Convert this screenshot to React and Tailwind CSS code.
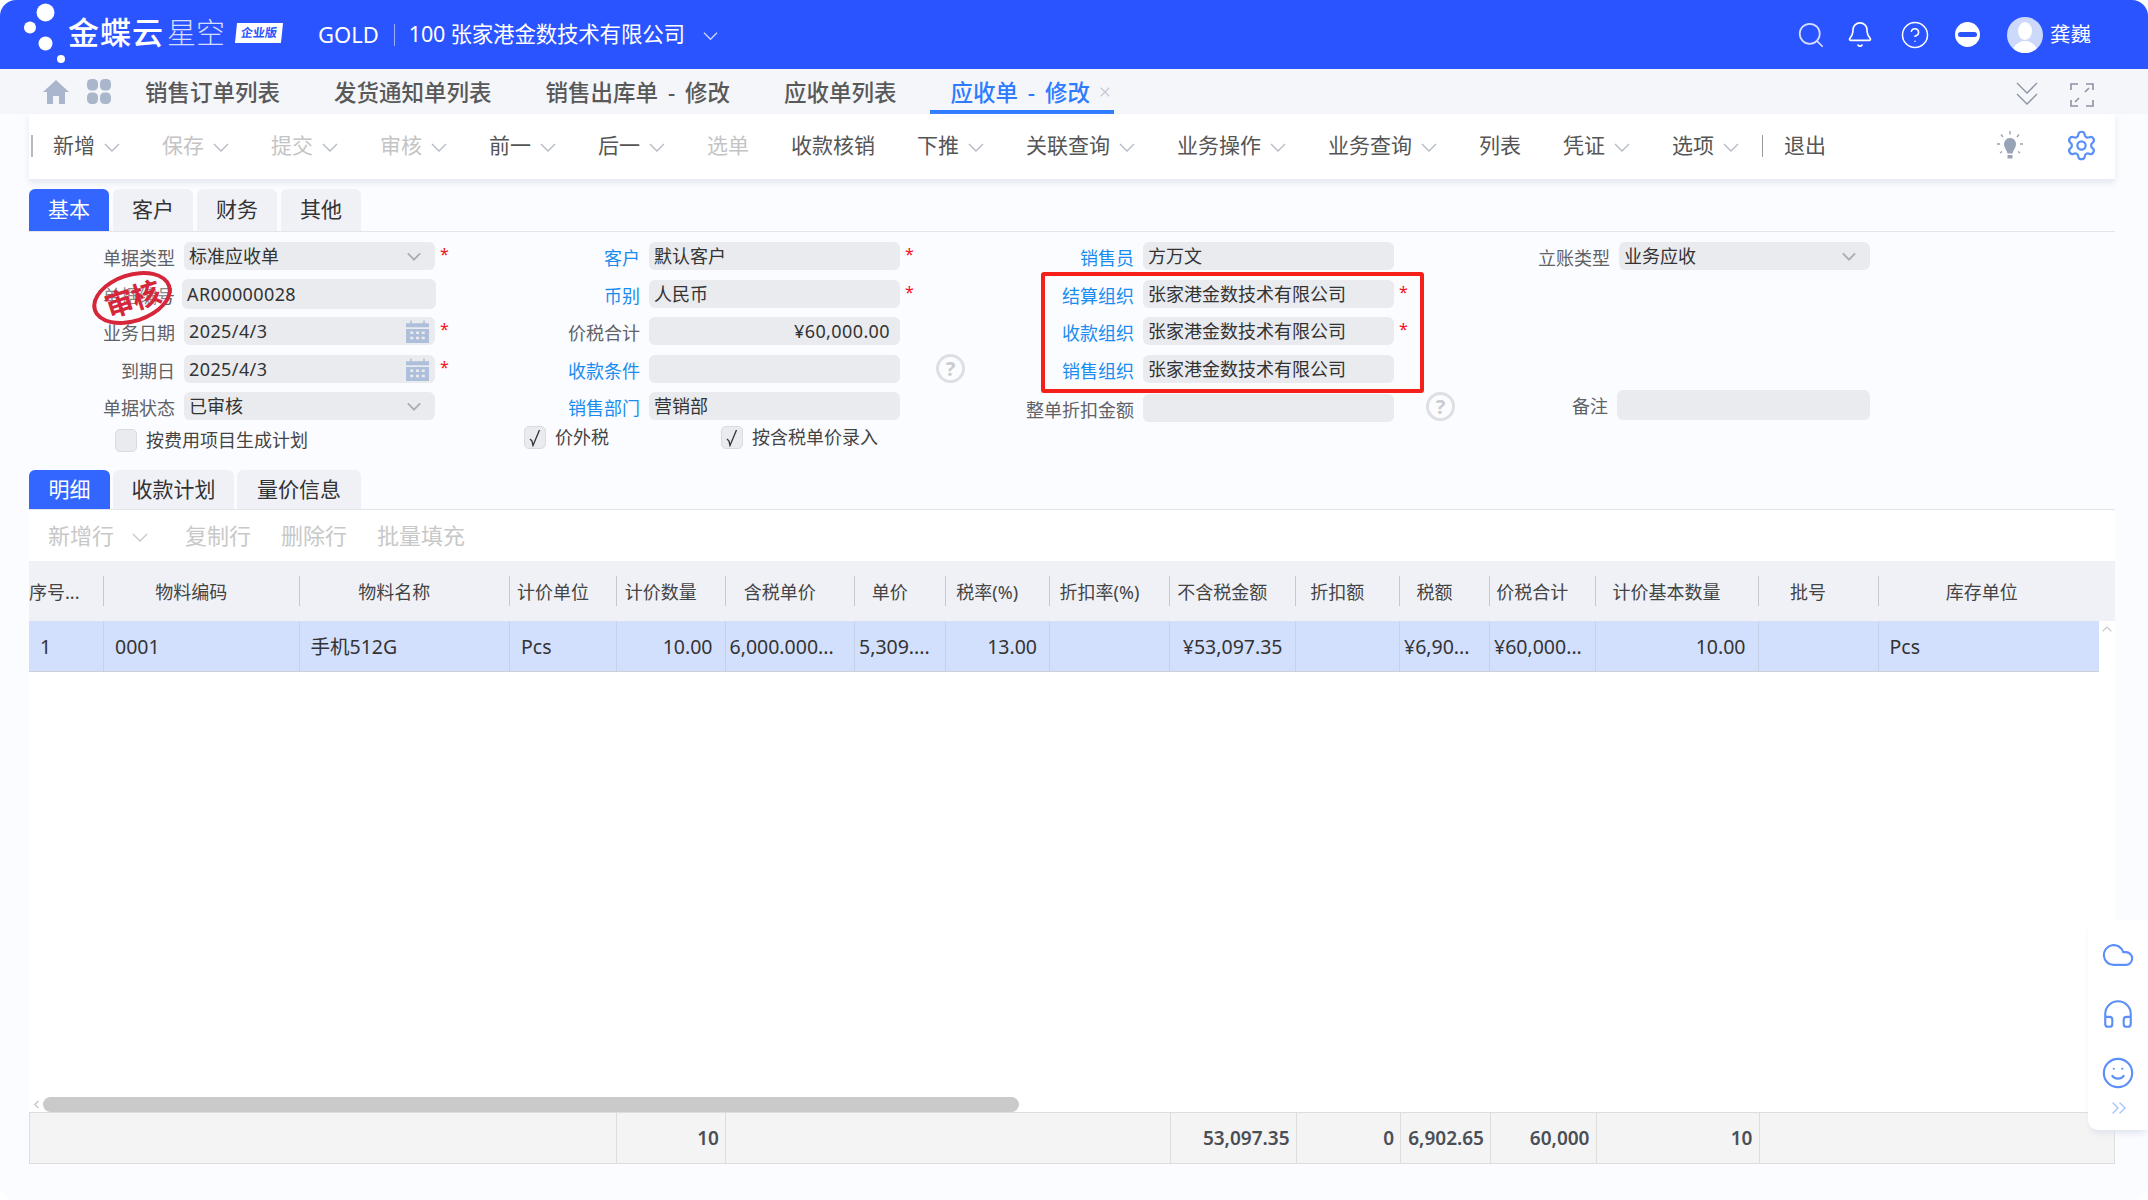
import { Search, Bell, CircleHelp, ChevronUp, ChevronLeft, ChevronsRight, Settings, Cloud, Headphones, Smile, X } from 'lucide-react'

const navTabs = ['销售订单列表', '发货通知单列表', '销售出库单 - 修改', '应收单列表']

const toolbar = [
  { t: '新增', m: 1 },
  { t: '保存', m: 1, off: 1 },
  { t: '提交', m: 1, off: 1 },
  { t: '审核', m: 1, off: 1 },
  { t: '前一', m: 1 },
  { t: '后一', m: 1 },
  { t: '选单', off: 1 },
  { t: '收款核销' },
  { t: '下推', m: 1 },
  { t: '关联查询', m: 1 },
  { t: '业务操作', m: 1 },
  { t: '业务查询', m: 1 },
  { t: '列表' },
  { t: '凭证', m: 1 },
  { t: '选项', m: 1 },
]

const columns = ['序号...', '物料编码', '物料名称', '计价单位', '计价数量', '含税单价', '单价', '税率(%)', '折扣率(%)', '不含税金额', '折扣额', '税额', '价税合计', '计价基本数量', '批号', '库存单位']

const row = [
  { v: '1' },
  { v: '0001' },
  { v: '手机512G' },
  { v: 'Pcs' },
  { v: '10.00', r: 1 },
  { v: '6,000.000...', tight: 1 },
  { v: '5,309....', tight: 1 },
  { v: '13.00', r: 1 },
  { v: '' },
  { v: '¥53,097.35', r: 1 },
  { v: '' },
  { v: '¥6,90...', tight: 1 },
  { v: '¥60,000...', tight: 1 },
  { v: '10.00', r: 1 },
  { v: '' },
  { v: 'Pcs' },
]

const tableCols = 'grid-cols-[74px_195.5px_210.5px_107px_108.5px_129.5px_90.5px_104.5px_120px_125.5px_104.5px_90px_105.5px_163px_120px_1fr]'

function Caret({ className = '', strokeWidth = 1.4 }) {
  return (
    <svg viewBox="0 0 16 9" className={className} fill="none" stroke="currentColor" strokeWidth={strokeWidth}>
      <path d="M1 1l7 7 7-7" />
    </svg>
  )
}

function Star() {
  return <span className="absolute left-[256px] top-[-2px] text-[16px] leading-[28px] text-[#f5101a]">*</span>
}

function CalendarIcon() {
  return (
    <svg viewBox="0 0 24 24" className="w-[25px] h-[25px] text-[#aebfdc]" fill="currentColor">
      <path d="M1 4h4V1.500h1.500V4h11V1.500H19V4h4v4H1z" />
      <path fillRule="evenodd" d="M1 9.500h22V23H1zM5 12v2.500h3V12zm5.500 0v2.500h3V12zm5.500 0v2.500h3V12zM5 17v2.500h3V17zm5.500 0v2.500h3V17zm5.500 0v2.500h3V17z" />
    </svg>
  )
}

function Field({ label, link, value, right, select, date, star, num, className = '', boxClassName = 'w-[251px] h-[28px]' }) {
  return (
    <div className={`flex items-start ${className}`}>
      <div className={`flex-1 text-right pr-[9px] text-[18px] leading-[32px] whitespace-nowrap ${link ? 'text-[#1a8cf0]' : 'text-[#606266]'}`}>{label}</div>
      <div className={`relative shrink-0 ${boxClassName}`}>
        <div className={`h-full rounded-[6px] bg-[#e9ebef] px-[5px] flex items-center justify-between text-[18px] text-[#333] ${right ? 'justify-end pr-[10px]' : ''}`}>
          <span className={num ? 'tracking-[0.4px]' : ''}>{value}</span>
          {select && <Caret className="w-[14px] h-[9px] mr-[9px] text-[#a9adb5]" strokeWidth={2.2} />}
          {date && <CalendarIcon />}
        </div>
        {star && <Star />}
      </div>
    </div>
  )
}

function Help({ className = '' }) {
  return (
    <div className={`absolute w-[29px] h-[29px] rounded-full border-[3px] border-[#dedfe2] text-[#c9cbcf] text-[20px] font-bold flex items-center justify-center ${className}`}>?</div>
  )
}

function Check({ checked, label, className = '' }) {
  return (
    <label className={`flex items-center gap-[9px] text-[18px] text-[#444] ${className}`}>
      <span className="w-[22px] h-[23px] rounded-[5px] bg-[#e9ebef] border border-[#d9dbe0] flex items-center justify-center text-[#333]">
        {checked && (
          <svg viewBox="0 0 12 18" className="w-[12px] h-[18px]" fill="none" stroke="currentColor" strokeWidth="1.300">
            <path d="M1 10l2 2 1 4.500L10.500 1" />
          </svg>
        )}
      </span>
      {label}
    </label>
  )
}

function Tab({ active, children, className = '' }) {
  return (
    <div className={`flex items-center justify-center rounded-t-[6px] text-[21px] ${active ? 'bg-[#3366ff] text-white' : 'bg-[#eff1f7] text-[#333]'} ${className}`}>
      {children}
    </div>
  )
}

export default function App() {
  return (
    <div className="relative h-[1200px] w-[2148px] overflow-hidden bg-white font-['Noto_Sans','Noto_Sans_CJK_SC',sans-serif]">
      <div className="h-full rounded-[16px] overflow-hidden bg-[#fbfcff] flex flex-col">
        {/* top bar */}
        <header className="h-[69px] shrink-0 bg-[#2a54ff] text-white flex items-center">
          <svg viewBox="0 0 66 69" className="w-[66px] h-[69px] shrink-0" fill="#fff">
            <circle cx="45.500" cy="12.500" r="9" />
            <circle cx="30" cy="27.500" r="6" />
            <circle cx="45.500" cy="43.500" r="7" />
            <circle cx="61" cy="59" r="4" />
          </svg>
          <span className="ml-[2px] text-[31px] leading-none font-medium tracking-[1px] -mt-[5px]">金蝶云</span>
          <span className="ml-[3px] text-[29px] leading-none font-light text-[#d5ddff] -mt-[5px]">星空</span>
          <span className="ml-[11px] -mt-[4px] w-[46px] h-[20px] bg-white text-[#2a54ff] text-[12px] font-bold flex items-center justify-center -skew-x-6">企业版</span>
          <span className="ml-[36px] text-[22px]">GOLD</span>
          <span className="ml-[15px] w-px h-[22px] bg-[#9db0ff]" />
          <span className="ml-[14px] text-[21.500px] tracking-[-0.2px]">100 张家港金数技术有限公司</span>
          <Caret className="ml-[18px] mt-[3px] w-[15px] h-[10px] text-[#c9d5ff]" />
          <div className="ml-auto flex items-center">
            <Search className="w-[30px] h-[30px] text-[#d5ddff]" strokeWidth={1.400} />
            <Bell className="ml-[20px] w-[28px] h-[31px]" strokeWidth={1.400} />
            <CircleHelp className="ml-[26px] w-[30px] h-[30px]" strokeWidth={1.200} />
            <span className="ml-[25px] w-[25px] h-[25px] rounded-full bg-white flex items-center justify-center">
              <span className="w-[19px] h-[5px] rounded-full bg-[#2a54ff]" />
            </span>
            <span className="ml-[27px] w-[36px] h-[36px] rounded-full bg-[#cdd9fb] overflow-hidden">
              <svg viewBox="0 0 36 36" fill="#fff" className="w-full h-full">
                <ellipse cx="18" cy="14" rx="7" ry="9" />
                <path d="M5 36c1-9 7-10 10-12h6c3 2 9 3 10 12z" />
              </svg>
            </span>
            <span className="ml-[7px] mr-[57px] text-[20.500px]">龚巍</span>
          </div>
        </header>

        {/* open pages */}
        <nav className="relative h-[45px] shrink-0 bg-[#f4f6fa] flex items-center">
          <svg viewBox="0 0 26 24" className="ml-[43px] w-[26px] h-[24px] text-[#aab6cc]" fill="currentColor">
            <path d="M13 0 0 12h4v12h6v-8h6v8h6V12h4z" />
          </svg>
          <svg viewBox="0 0 24 25" className="ml-[18px] w-[24px] h-[25px] text-[#aab6cc]" fill="currentColor">
            <rect x="0" y="0" width="11" height="11.500" rx="4.500" />
            <rect x="13" y="0" width="11" height="11.500" rx="4.500" />
            <rect x="0" y="13.500" width="11" height="11.500" rx="4.500" />
            <rect x="13" y="13.500" width="11" height="11.500" rx="4.500" />
          </svg>
          <div className="ml-[34px] pt-[3px] flex items-center gap-[54px] text-[22.500px] font-medium text-[#595959] [word-spacing:4px]">
            {navTabs.map(t => <span key={t}>{t}</span>)}
          </div>
          <div className="relative ml-[34px] h-full w-[184px] flex items-center pl-[20px] text-[22.500px] font-medium text-[#2f7bff] border-b-[4px] border-[#2f7bff] pt-[7px] whitespace-nowrap [word-spacing:4px]">
            应收单 - 修改
            <X className="absolute right-[1px] top-[15px] w-[16px] h-[16px] text-[#c3c8d2]" strokeWidth={1.600} />
          </div>
          <svg viewBox="0 0 22 24" className="absolute left-[2016px] top-[13px] w-[22px] h-[24px] text-[#8b93a3]" fill="none" stroke="currentColor" strokeWidth="1.300">
            <path d="M1 1l10 10L21 1M1 12l10 10 10-10" />
          </svg>
          <svg viewBox="0 0 24 24" className="absolute left-[2070px] top-[14px] w-[24px] h-[24px] text-[#8b93a3]" fill="none" stroke="currentColor" strokeWidth="1.600">
            <path d="M1 7V1h7M16 1h7v6M23 17v6h-7M8 23H1v-6M19 5l-4 4M5 19l4-4" />
          </svg>
        </nav>

        <main className="relative mx-[29px] mr-[33px] flex-1 flex flex-col">
          {/* toolbar */}
          <div className="h-[65px] shrink-0 bg-white shadow-[0_4px_6px_rgba(225,230,240,0.9)] flex items-center pb-[2px] text-[21px] text-[#555]">
            <span className="ml-[2px] w-[2px] h-[22px] bg-[#b9b9b9]" />
            <div className="ml-[20px] flex items-center gap-[42px]">
              {toolbar.map(b => (
                <div key={b.t} className={`flex items-center ${b.off ? 'text-[#c4c4c4]' : ''}`}>
                  {b.t}
                  {b.m && <Caret className="ml-[9px] w-[16px] h-[9px] text-[#b5bac3] mt-[3px]" />}
                </div>
              ))}
            </div>
            <span className="ml-[23px] w-px h-[22px] bg-[#999]" />
            <span className="ml-[21px]">退出</span>
            <svg viewBox="0 0 28 30" className="absolute left-[1967px] top-[17px] w-[28px] h-[30px] text-[#98a3b8]">
              <path d="M14 7c-4 0-6 3.500-6 6.500 0 3 3 6 3.500 9h5c.5-3 3.500-6 3.500-9C20 10 18 7 14 7z" fill="currentColor" />
              <path d="M11.500 24h5v3.500h-5z" fill="currentColor" />
              <path d="M14 0v3.500M5 3.500 7 6M23 3.500 21 6M1 13h3M24 13h3M4 22l2-1.500M24 22l-2-1.500" stroke="currentColor" strokeWidth="1.400" fill="none" />
            </svg>
            <Settings className="absolute left-[2036px] top-[15px] w-[33px] h-[33px] text-[#5b8ff9]" strokeWidth={1.600} />
          </div>

          {/* head tabs */}
          <div className="mt-[10px] h-[43px] shrink-0 flex gap-[4px] border-b border-[#e3e5eb]">
            <Tab active className="w-[80px]">基本</Tab>
            <Tab className="w-[80px]">客户</Tab>
            <Tab className="w-[80px]">财务</Tab>
            <Tab className="w-[80px]">其他</Tab>
          </div>

          {/* form */}
          <div className="relative mt-[10px] shrink-0">
            <div className="grid grid-cols-[406px_465px_494px_476px] grid-rows-[38px_37px_38px_37px_28px]">
              <Field label="单据类型" value="标准应收单" select star />
              <Field label="客户" link value="默认客户" star />
              <Field label="销售员" link value="方万文" />
              <Field label="立账类型" value="业务应收" select />

              <Field label="单据编号" value="AR00000028" num boxClassName="w-[254px] h-[30px] -mr-[1px] -ml-[2px] -mt-[1px]" />
              <Field label="币别" link value="人民币" star />
              <Field label="结算组织" link value="张家港金数技术有限公司" star />
              <div />

              <Field label="业务日期" value="2025/4/3" num date star />
              <Field label="价税合计" value="¥60,000.00" right num />
              <Field label="收款组织" link value="张家港金数技术有限公司" star />
              <div />

              <Field label="到期日" value="2025/4/3" num date star />
              <Field label="收款条件" link value="" />
              <Field label="销售组织" link value="张家港金数技术有限公司" />
              <div />

              <Field label="单据状态" value="已审核" select />
              <Field label="销售部门" link value="营销部" />
              <Field label="整单折扣金额" value="" className="mt-[2px]" />
              <Field label="备注" value="" className="-mt-[2px]" boxClassName="w-[253px] h-[30px]" />
            </div>

            <Help className="left-[907px] top-[112px]" />
            <Help className="left-[1397px] top-[150px]" />

            {/* approved stamp */}
            <div className="absolute left-[62px] top-[31px] w-[82px] h-[50px] rounded-[50%] border-[4px] border-[#d6263a] bg-white/25 -rotate-[18deg] flex items-center justify-center text-[29px] leading-none font-bold text-[#d6263a] tracking-[-1px]">
              审核
            </div>

            {/* highlight drawn over the org fields */}
            <div className="absolute left-[1012px] top-[30px] w-[383px] h-[121px] rounded-[3px] border-[4px] border-[#f5201a]" />
          </div>

          <div className="h-[50px] shrink-0 flex pt-[3px] items-start">
            <Check label="按费用项目生成计划" className="ml-[86px] mt-[4px]" />
            <Check checked label="价外税" className="ml-[216px] mt-[1px]" />
            <Check checked label="按含税单价录入" className="ml-[112px] mt-[1px]" />
          </div>

          {/* entry tabs */}
          <div className="h-[40px] shrink-0 flex gap-[3px] border-b border-[#e3e5eb]">
            <Tab active className="w-[81px]">明细</Tab>
            <Tab className="w-[121px]">收款计划</Tab>
            <Tab className="w-[124px]">量价信息</Tab>
          </div>

          <div className="relative flex-1 flex flex-col">
            <div className="h-[51px] shrink-0 bg-white flex items-center text-[22px] text-[#c8c8c8]">
              <span className="ml-[19px] flex items-center">
                新增行
                <Caret className="ml-[18px] w-[16px] h-[9px] mt-[3px]" />
              </span>
              <span className="ml-[37px]">复制行</span>
              <span className="ml-[30px]">删除行</span>
              <span className="ml-[30px]">批量填充</span>
            </div>

            {/* grid head */}
            <div className={`h-[60px] shrink-0 bg-[#eff1f7] grid ${tableCols} items-center text-[18px] text-[#444]`}>
              {columns.map((c, i) => (
                <div key={c} className={`h-[30px] flex items-center pt-[3px] whitespace-nowrap ${i === 0 ? 'justify-start' : i === 15 ? 'justify-center border-l border-[#c4c8d0] pr-[30px]' : 'justify-center border-l border-[#c4c8d0] pr-[20px]'}`}>{c}</div>
              ))}
            </div>

            {/* grid body */}
            <div className="flex-none h-[491px] bg-white relative">
              <div className={`w-[2070px] h-[51px] bg-[#d2dffd] border-b border-[#cdd0d6] grid ${tableCols} text-[19.500px] text-[#333]`}>
                {row.map((c, i) => (
                  <div key={i} className={`h-full flex items-center pt-[1px] whitespace-nowrap overflow-hidden ${i > 0 ? 'border-l border-[#c6d1e8]' : ''} ${c.r ? 'justify-end pr-[12px]' : c.tight ? 'pl-[4px]' : 'pl-[11px]'}`}>{c.v}</div>
                ))}
              </div>
              <ChevronUp className="absolute left-[2070px] top-[0px] w-[16px] h-[16px] text-[#c9c9c9]" strokeWidth={1.600} />
              <div className="absolute left-0 bottom-0 h-[15px] w-full flex items-center">
                <ChevronLeft className="ml-[1px] w-[13px] h-[15px] text-[#c0c0c0]" strokeWidth={2} />
                <div className="h-[15px] w-[976px] rounded-full bg-[#cacaca]" />
              </div>
            </div>

            {/* summary */}
            <div className="h-[52px] shrink-0 bg-[#f4f4f4] border border-[#dddddd] grid grid-cols-[586px_109px_445px_125.500px_104.500px_90px_105.500px_163px_1fr] text-[19px] font-semibold text-[#4a4f57]">
              <div />
              {['10', '', '53,097.35', '0', '6,902.65', '60,000', '10', ''].map((v, i) => (
                <div key={i} className="h-full flex items-center justify-end pr-[6px] border-l border-[#dddddd]">{v}</div>
              ))}
            </div>
          </div>
        </main>
      </div>

      {/* floating helper */}
      <aside className="absolute right-0 top-[920px] w-[60px] h-[210px] bg-white rounded-bl-[10px] shadow-[0_6px_6px_-3px_rgba(220,225,235,0.9)] flex flex-col items-center text-[#5b8ff9]">
        <Cloud className="mt-[18px] w-[34px] h-[34px]" strokeWidth={1.500} />
        <Headphones className="mt-[25px] w-[34px] h-[34px]" strokeWidth={1.500} />
        <Smile className="mt-[25px] w-[34px] h-[34px]" strokeWidth={1.500} />
        <ChevronsRight className="mt-[6px] ml-[2px] w-[24px] h-[24px] text-[#a9c4fb]" strokeWidth={1.400} />
      </aside>
    </div>
  )
}
